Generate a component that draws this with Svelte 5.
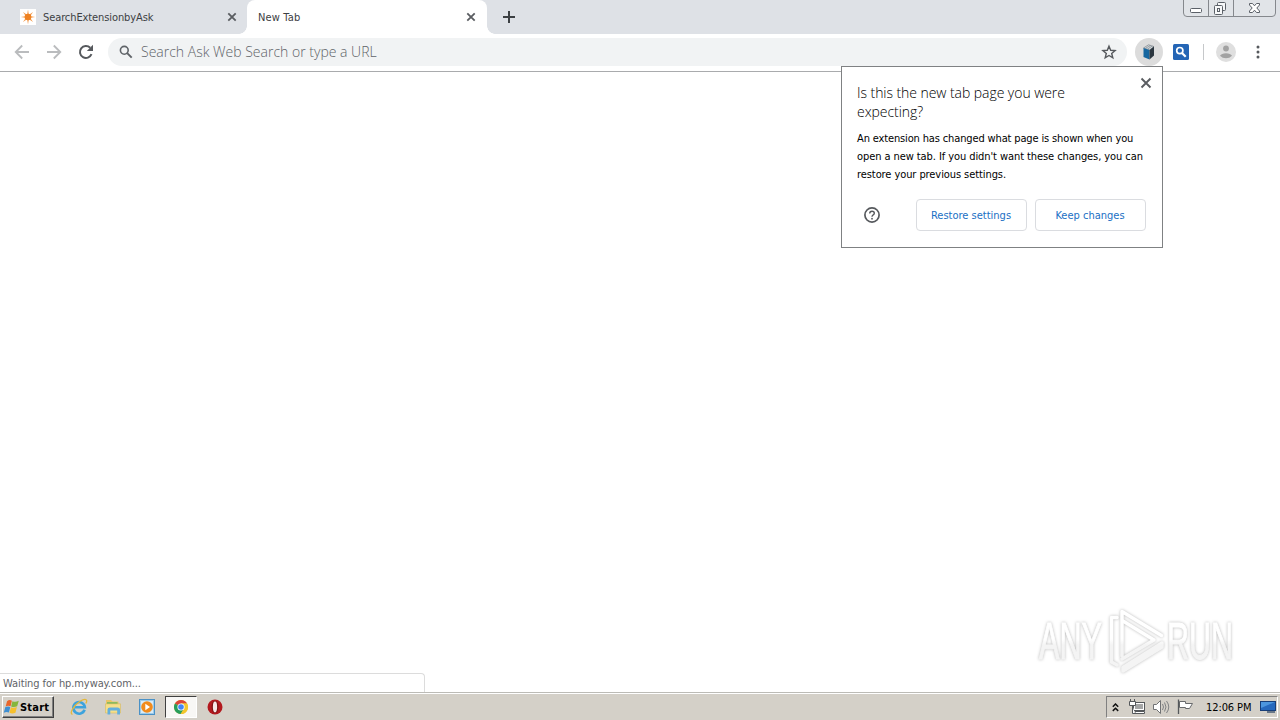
<script>
	let tabs = [
		{ title: 'SearchExtensionbyAsk', icon: true, active: false },
		{ title: 'New Tab', icon: false, active: true }
	];

	let popupLines = [
		'An extension has changed what page is shown when you',
		"open a new tab. If you didn't want these changes, you can",
		'restore your previous settings.'
	];

	const rays = [0, 45, 90, 135, 180, 225, 270, 315];
</script>

<div class="desktop">
	<div class="tabstrip">
		{#each tabs as tab}
			<div class="tab" class:active={tab.active}>
				{#if tab.icon}
					<svg class="favicon" width="16" height="16" viewBox="0 0 16 16">
						<rect width="16" height="16" fill="#fff" />
						{#each rays as angle}
							<path d="M6.7 8 L8 0.8 L9.3 8 Z" fill="#f39a4c" transform="rotate({angle} 8 8)" />
						{/each}
						<circle cx="8" cy="8" r="3.3" fill="#ee8122" />
					</svg>
				{/if}
				<span class="tab-title" class:long={tab.icon}>{tab.title}</span>
				<svg class="tab-close" width="10" height="10" viewBox="0 0 10 10">
					<path d="M1.3 1.3 L8.7 8.7 M8.7 1.3 L1.3 8.7" stroke="#5a5d61" stroke-width="1.8" />
				</svg>
			</div>
		{/each}
		<svg class="new-tab" width="14" height="14" viewBox="0 0 14 14">
			<path d="M7 1 V13 M1 7 H13" stroke="#3c4043" stroke-width="2" />
		</svg>
		<div class="window-buttons">
			<svg width="97" height="17" viewBox="0 0 97 17">
				<path d="M0.5 0 V13 Q0.5 16.5 4 16.5 H89 Q92.5 16.5 92.5 13 V0 M25.5 0 V16 M50.5 0 V16" fill="#e1e4e8" stroke="#85888d" />
				<rect x="7.5" y="8.5" width="11" height="4" rx="1" fill="#fff" stroke="#5b6068" />
				<g fill="#f7f8f9" stroke="#5b6068">
					<rect x="34.5" y="2.5" width="8" height="8" rx="1" />
					<rect x="31.5" y="5.5" width="8" height="9" rx="1" />
					<rect x="34.5" y="8.5" width="2" height="3" />
				</g>
				<path d="M66.5 3.5 H69.5 L71.5 5.8 L73.5 3.5 H76.5 V5 L73.8 8 L76.5 11 V12.5 H73.5 L71.5 10.2 L69.5 12.5 H66.5 V11 L69.2 8 L66.5 5 Z" fill="#fff" stroke="#5b6068" />
			</svg>
		</div>
	</div>

	<div class="toolbar">
		<div class="nav">
			<svg width="16" height="16" viewBox="0 0 16 16" fill="none" stroke="#babcbe" stroke-width="1.8">
				<path d="M15 8 H2 M8.2 1.5 L1.7 8 L8.2 14.5" />
			</svg>
			<svg width="16" height="16" viewBox="0 0 16 16" fill="none" stroke="#babcbe" stroke-width="1.8">
				<path d="M1 8 H14 M7.8 1.5 L14.3 8 L7.8 14.5" />
			</svg>
			<svg width="16" height="16" viewBox="0 0 16 16">
				<path d="M13.5 10.2 A6 6 0 1 1 12.2 3.7" fill="none" stroke="#56595d" stroke-width="2" />
				<path d="M15 0.8 V7 H8.8 Z" fill="#56595d" />
			</svg>
		</div>
		<div class="omnibox">
			<svg width="14" height="14" viewBox="0 0 14 14" fill="none" stroke="#5f6368">
				<circle cx="5.3" cy="5.3" r="3.9" stroke-width="1.6" />
				<path d="M8.2 8.2 L12.7 12.7" stroke-width="1.9" />
			</svg>
			<span class="placeholder">Search Ask Web Search or type a URL</span>
			<svg width="16" height="16" viewBox="0 0 16 16">
				<path d="M8 2.2 L9.7 6.3 L14.1 6.6 L10.7 9.5 L11.8 13.8 L8 11.5 L4.2 13.8 L5.3 9.5 L1.9 6.6 L6.3 6.3 Z" fill="none" stroke="#56595d" stroke-width="1.4" />
			</svg>
		</div>
		<div class="extension">
			<svg width="14" height="16" viewBox="0 0 14 16">
				<path d="M1.5 4 L6.5 0.8 L12 2.6 L7.5 6 Z" fill="#d6dadd" stroke="#6b747b" stroke-width="0.6" />
				<path d="M1.5 4 L7.5 6 V15.5 L1.5 13 Z" fill="#1767a0" />
				<path d="M7.5 6 L12 2.6 V11.5 L7.5 15.5 Z" fill="#2b363f" />
				<path d="M3.5 4.3 L8.4 1.5 M5.5 5 L10.3 2.1" stroke="#7a848b" stroke-width="0.7" />
			</svg>
		</div>
		<svg class="search-ext" width="16" height="16" viewBox="0 0 16 16">
			<rect width="16" height="16" rx="1.5" fill="#2465b5" />
			<circle cx="6.8" cy="6.6" r="3.1" fill="none" stroke="#fff" stroke-width="1.7" />
			<path d="M9 9 L12.7 12.7" stroke="#fff" stroke-width="2.2" />
		</svg>
		<span class="separator"></span>
		<svg class="avatar" width="20" height="20" viewBox="0 0 20 20">
			<circle cx="10" cy="10" r="10" fill="#dfdfdf" />
			<circle cx="10" cy="6.5" r="2.9" fill="#a2a2a2" />
			<path d="M4 13.7 Q5.5 11.2 10 11.2 Q14.5 11.2 16 13.7 Q13.6 16.3 10 16.3 Q6.4 16.3 4 13.7 Z" fill="#a2a2a2" />
		</svg>
		<svg class="menu" width="4" height="14" viewBox="0 0 4 14" fill="#56595d">
			<circle cx="2" cy="2" r="1.5" />
			<circle cx="2" cy="7" r="1.5" />
			<circle cx="2" cy="12" r="1.5" />
		</svg>
	</div>

	<div class="page">
		<div class="status">Waiting for hp.myway.com...</div>
	</div>

	<div class="taskbar">
		<div class="start">
			<svg width="17" height="16" viewBox="0 0 18 16">
				<path d="M4.3 1.8 Q6.9 -0.3 9.4 1.4 L8 7.2 Q5.3 5.9 2.8 7.5 Z" fill="#e9662c" />
				<path d="M10 1.8 Q13 3.5 16.7 1.4 L15 7.3 Q11.7 8.7 8.6 7.5 Z" fill="#86b63c" />
				<path d="M2.5 8.1 Q5.2 6.7 7.7 7.9 L6.3 13.8 Q3.6 12.5 0.8 14.1 Z" fill="#3f8fd2" />
				<path d="M8.4 8.2 Q11.5 9.4 14.7 8 L13.2 14 Q10 15.5 6.9 14.2 Z" fill="#f6c02d" />
			</svg>
			<b>Start</b>
		</div>
		<div class="launchers">
			<div class="launcher">
				<svg width="18" height="18" viewBox="0 0 18 18" fill="none">
					<path d="M14.6 11.8 A5.8 5.8 0 1 1 14.9 9.3 H5" stroke="#3da3dd" stroke-width="2.6" />
					<path d="M2.5 16.3 C-1 16 3 8 10 3.2 C15 0.2 18.5 1 15.8 5.5" stroke="#e4b83a" stroke-width="1.3" />
				</svg>
			</div>
			<div class="launcher">
				<svg width="18" height="18" viewBox="0 0 18 18">
					<path d="M2 2 H7 L8.5 3.5 H14.5 V14 H2 Z" fill="#e9c566" />
					<path d="M3 4.2 H13.5 V6 H3 Z" fill="#73b95e" />
					<path d="M1.5 5.8 H16.5 V15 H1.5 Z" fill="#f5df8a" stroke="#d3b355" stroke-width="0.5" />
					<path d="M3.5 16.5 V11.5 Q3.5 9.5 6 9.5 H13.5 Q16 9.5 16 11.5 V16.5 H13.2 V12.5 H6.3 V16.5 Z" fill="#63afdd" />
				</svg>
			</div>
			<div class="launcher">
				<svg width="18" height="18" viewBox="0 0 18 18">
					<rect x="1.5" y="1.5" width="15" height="15" fill="#9ccbea" stroke="#4a91c6" />
					<rect x="3" y="3" width="12" height="12" fill="#d8ebf8" />
					<circle cx="9" cy="9" r="5.8" fill="#f18b1c" />
					<path d="M7.3 5.8 L12 9 L7.3 12.2 Z" fill="#fff" />
				</svg>
			</div>
			<div class="launcher pressed">
				<svg width="16" height="16" viewBox="0 0 16 16">
					<circle cx="8" cy="8" r="7" fill="#f2c62e" />
					<path d="M8 8 L1.9 4.5 A7 7 0 0 1 14.1 4.5 H8 Z" fill="#db4437" />
					<path d="M1.9 4.5 A7 7 0 0 0 7.7 15 L11 9.7 L8 8 Z" fill="#279d5b" />
					<path d="M8 4.5 H14.1 A7 7 0 0 1 7.7 15 L11 9.8 Z" fill="#f2c62e" />
					<circle cx="8" cy="8" r="3.6" fill="#fff" />
					<circle cx="8" cy="8" r="2.8" fill="#4285f4" />
				</svg>
			</div>
			<div class="launcher">
				<svg width="16" height="16" viewBox="0 0 16 16">
					<circle cx="8" cy="8" r="7.5" fill="#b3181e" />
					<ellipse cx="8" cy="8" rx="3.4" ry="6.2" fill="#7c1114" />
					<ellipse cx="8" cy="8" rx="2.1" ry="5.4" fill="#f7e6e6" />
				</svg>
			</div>
		</div>
		<div class="tray">
			<svg class="chevrons" width="7" height="9" viewBox="0 0 7 9" fill="none" stroke="#111" stroke-width="1.5">
				<path d="M0.8 3.7 L3.5 1 L6.2 3.7 M0.8 7.9 L3.5 5.2 L6.2 7.9" />
			</svg>
			<svg class="network" width="17" height="16" viewBox="0 0 17 16">
				<rect x="4.5" y="3.5" width="11" height="8" fill="#fff" stroke="#55585b" />
				<rect x="6" y="5" width="8" height="5" fill="#a5a6a6" />
				<path d="M6 14.500 H15.500 V12.500 H6 Z" fill="#fff" stroke="#55585b" />
				<path d="M0.5 2.5 H6.5 V6.5 H0.5 Z M1.5 0 V2 M5.5 0 V2 M3.5 7 V14.5 H6" fill="#fff" stroke="#55585b" />
			</svg>
			<svg class="speaker" width="17" height="16" viewBox="0 0 17 16">
				<path d="M0.5 5.5 H3.5 L7.5 1.5 V14.5 L3.5 10.5 H0.5 Z" fill="#fff" stroke="#707274" />
				<path d="M9.5 5 Q11.5 8 9.5 11 M11.5 3.5 Q14.5 8 11.5 12.5 M13.5 2 Q18 8 13.5 14" fill="none" stroke="#808284" />
			</svg>
			<svg class="flag" width="17" height="16" viewBox="0 0 17 16">
				<path d="M2.5 2.5 H8.5 V4.5 H15.5 L12.5 9.5 H8.5 V8.5 H2.5 Z" fill="#fff" stroke="#686a6c" />
				<path d="M1.5 0.5 V15" stroke="#55585b" stroke-width="1.3" />
			</svg>
			<span class="clock">12:06 PM</span>
			<svg class="desktop-icon" width="16" height="14" viewBox="0 0 16 14">
				<rect x="0.5" y="1.5" width="15" height="9" fill="#2669be" stroke="#173e79" />
				<path d="M1 2 H15 L1 8 Z" fill="#4c96df" />
				<path d="M7 12 H15" stroke="#465a73" stroke-width="1.5" />
			</svg>
		</div>
	</div>

	<div class="popup">
		<div class="popup-title">
			<div>Is this the new tab page you were</div>
			<div>expecting?</div>
		</div>
		<div class="popup-body">
			{#each popupLines as line}
				<div>{line}</div>
			{/each}
		</div>
		<div class="popup-actions">
			<svg width="16" height="16" viewBox="0 0 16 16">
				<circle cx="8" cy="8" r="7.1" fill="none" stroke="#56595d" stroke-width="1.7" />
				<path d="M5.7 6.5 Q5.7 4.2 8 4.2 Q10.3 4.2 10.3 6.2 Q10.3 7.2 9.2 7.9 Q8 8.7 8 9.8" fill="none" stroke="#56595d" stroke-width="1.4" />
				<rect x="7.2" y="10.9" width="1.6" height="1.6" fill="#56595d" />
			</svg>
			<button class="restore">Restore settings</button>
			<button class="keep">Keep changes</button>
		</div>
		<svg class="popup-close" width="12" height="12" viewBox="0 0 12 12">
			<path d="M1.5 1.5 L10.5 10.5 M10.5 1.5 L1.5 10.5" stroke="#5a5d61" stroke-width="1.9" />
		</svg>
	</div>

	<div class="watermark">
		<svg width="240" height="74" viewBox="0 0 240 74">
			<defs>
				<linearGradient id="fade" gradientUnits="userSpaceOnUse" x1="0" y1="35" x2="0" y2="41">
					<stop offset="0" stop-color="#fff" />
					<stop offset="1" stop-color="#f4f4f4" />
				</linearGradient>
			</defs>
			<g class="word" fill="url(#fade)">
				<text x="9" y="55" textLength="63" lengthAdjust="spacingAndGlyphs">ANY</text>
				<text x="137" y="55" textLength="66" lengthAdjust="spacingAndGlyphs">RUN</text>
			</g>
			<g class="mark" stroke="url(#fade)">
				<path d="M87 13.5 H81.5 V58 L87 61" />
				<path d="M92 52 V7.5 L131.5 31.5" />
				<path d="M93 17 L124 36 L92 55" />
				<path d="M132 39 L93 63.5 V67 L132 43 Z" />
			</g>
		</svg>
	</div>
</div>

<style>
	:global(body) {
		margin: 0;
		overflow: hidden;
	}

	.desktop {
		position: relative;
		width: 1280px;
		height: 720px;
		display: flex;
		flex-direction: column;
		background: #fff;
		overflow: hidden;
		font-family: 'DejaVu Sans Condensed', 'DejaVu Sans', sans-serif;
		font-stretch: condensed;
		font-size: 11px;
		color: #000;
	}

	svg {
		display: block;
		flex: none;
	}

	.tabstrip {
		height: 34px;
		display: flex;
		align-items: center;
		background: #dee1e6;
	}

	.tab {
		position: relative;
		box-sizing: border-box;
		width: 247px;
		height: 34px;
		display: flex;
		align-items: center;
		padding: 0 10px 0 20px;
		color: #3c4043;
	}

	.tab.active {
		width: 240px;
		padding: 0 11px;
		background: #fff;
		border-radius: 8px 8px 0 0;
	}

	/* curved feet of the selected tab */
	.tab.active::before,
	.tab.active::after {
		content: '';
		position: absolute;
		bottom: 0;
		width: 8px;
		height: 8px;
	}

	.tab.active::before {
		left: -8px;
		background: radial-gradient(circle at 0 0, #dee1e6 7.5px, #fff 8px);
	}

	.tab.active::after {
		right: -8px;
		background: radial-gradient(circle at 100% 0, #dee1e6 7.5px, #fff 8px);
	}

	.favicon {
		margin-right: 7px;
	}

	.tab-title {
		flex: 1;
		white-space: nowrap;
		letter-spacing: 0.15px;
	}

	.tab-title.long {
		letter-spacing: -0.1px;
	}

	.new-tab {
		margin-left: 15px;
	}

	.window-buttons {
		margin-left: auto;
		align-self: flex-start;
	}

	.toolbar {
		box-sizing: border-box;
		height: 38px;
		display: flex;
		align-items: center;
		padding-bottom: 1px;
		border-bottom: 1px solid #a9abad;
		background: #fff;
	}

	.nav {
		display: flex;
		gap: 16px;
		padding: 0 14px;
	}

	.omnibox {
		box-sizing: border-box;
		width: 1019px;
		height: 28px;
		display: flex;
		align-items: center;
		padding: 0 10px 0 11px;
		border-radius: 14px;
		background: #f1f3f4;
	}

	.placeholder {
		flex: 1;
		margin-left: 8px;
		padding-bottom: 1px;
		font-family: 'Open Sans', 'Noto Sans', sans-serif;
		font-stretch: normal;
		font-weight: 300;
		font-size: 14px;
		white-space: nowrap;
		color: #5f6368;
	}

	.extension {
		width: 28px;
		height: 28px;
		margin-left: 8px;
		display: flex;
		align-items: center;
		justify-content: center;
		border-radius: 50%;
		background: #dcdcdc;
	}

	.search-ext {
		margin-left: 10px;
	}

	.separator {
		width: 1px;
		height: 16px;
		margin-left: 14px;
		background: #c6c8ca;
	}

	.avatar {
		margin-left: 12px;
	}

	.menu {
		margin-left: 20px;
	}

	.page {
		flex: 1;
		display: flex;
		align-items: flex-end;
	}

	.status {
		box-sizing: border-box;
		width: 425px;
		height: 19px;
		padding-left: 3px;
		border: 1px solid #dcdcdc;
		border-width: 1px 1px 0 0;
		border-radius: 0 4px 0 0;
		line-height: 20px;
		letter-spacing: -0.09px;
		color: #5f6368;
	}

	.taskbar {
		box-sizing: border-box;
		height: 28px;
		display: flex;
		align-items: center;
		padding: 1px 2px 0;
		border-top: 1px solid #bcbbb6;
		box-shadow: inset 0 1px #fff;
		background: #d4d0c8;
	}

	.start {
		box-sizing: border-box;
		width: 52px;
		height: 22px;
		display: flex;
		align-items: center;
		border: 1px solid;
		border-color: #fff #404040 #404040 #fff;
		box-shadow: inset -1px -1px #808080;
	}

	.start b {
		font-size: 11px;
		letter-spacing: 0.2px;
	}

	.launchers {
		display: flex;
		margin-left: 9px;
		gap: 2px;
	}

	.launcher {
		box-sizing: border-box;
		width: 32px;
		height: 22px;
		display: flex;
		align-items: center;
		justify-content: center;
	}

	.launcher.pressed {
		border: 1px solid;
		border-color: #404040 #fff #fff #404040;
		background: #f8f7f5;
	}

	.tray {
		box-sizing: border-box;
		width: 172px;
		height: 22px;
		margin-left: auto;
		display: flex;
		align-items: center;
		padding: 0 1px 0 5px;
		border: 1px solid;
		border-color: #808080 #fff #fff #808080;
	}

	.network {
		margin-left: 10px;
	}

	.speaker {
		margin-left: 7px;
	}

	.flag {
		margin-left: 7px;
	}

	.clock {
		margin-left: 12px;
		flex: 1;
		white-space: nowrap;
		letter-spacing: -0.1px;
	}

	.popup {
		position: absolute;
		left: 841px;
		top: 66px;
		box-sizing: border-box;
		width: 322px;
		height: 182px;
		padding: 16px 16px 16px 15px;
		border: 1px solid #7f8183;
		background: #fff;
	}

	.popup-title {
		font-family: 'Open Sans', 'Noto Sans', sans-serif;
		font-stretch: normal;
		font-size: 14px;
		font-weight: 300;
		line-height: 19px;
		letter-spacing: -0.06px;
		white-space: nowrap;
	}

	.popup-body {
		margin-top: 9px;
		line-height: 18px;
		letter-spacing: -0.08px;
		white-space: nowrap;
	}

	.popup-body div:first-child {
		letter-spacing: -0.14px;
	}

	.popup-actions {
		display: flex;
		align-items: center;
		margin-top: 15px;
		padding-left: 7px;
	}

	.popup-actions button {
		box-sizing: border-box;
		width: 111px;
		height: 32px;
		margin-left: 8px;
		padding: 0 1px 0 0;
		border: 1px solid #dadce0;
		border-radius: 4px;
		background: #fff;
		font: inherit;
		white-space: nowrap;
		color: #1a6fc4;
	}

	.popup-actions .restore {
		margin-left: auto;
	}

	.popup-close {
		position: absolute;
		top: 10px;
		right: 10px;
	}

	.watermark {
		position: absolute;
		left: 1030px;
		top: 604px;
		filter: drop-shadow(0 0 1.5px rgba(0, 0, 0, 0.28));
	}

	.word {
		font: 400 51px 'Liberation Sans', sans-serif;
		stroke: url(#fade);
		stroke-width: 1px;
	}

	.mark {
		fill: none;
		stroke-width: 3.5;
		stroke-linejoin: round;
		stroke-linecap: round;
	}
</style>
